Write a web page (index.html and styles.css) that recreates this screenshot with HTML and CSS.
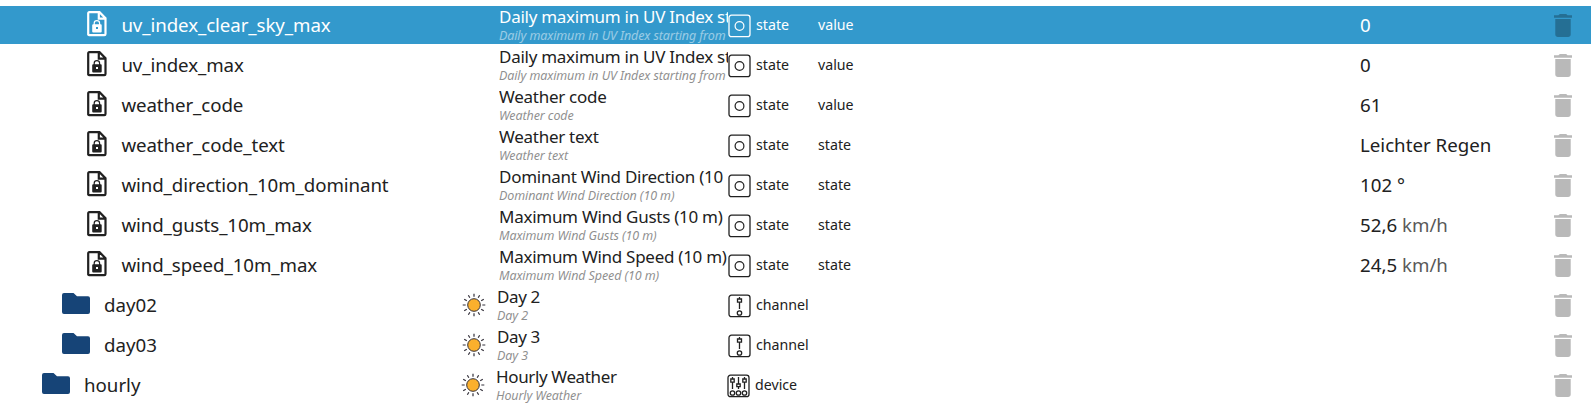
FILE: index.html
```html
<!DOCTYPE html>
<html lang="de"><head><meta charset="utf-8"><title>Objects</title><link rel="stylesheet" href="styles.css"></head>
<body>
<svg class="defs" aria-hidden="true">
<symbol id="doc" viewBox="0 0 20 26"><path d="M2.200 1.200h10.300l6 6V23a1.200 1.200 0 0 1-1.200 1.200H2.200A1 1 0 0 1 1.200 23V2.200a1 1 0 0 1 1-1zM11.800 1.500v6.200h6.200" fill="none" stroke="currentColor" stroke-width="2.200"/><path d="M7.200 14v-1.700a2.700 2.700 0 0 1 5.400 0V14" fill="none" stroke="currentColor" stroke-width="1.200"/><path fill-rule="evenodd" fill="currentColor" d="M6.200 13.300h7.500a1 1 0 0 1 1 1v6.200a1 1 0 0 1-1 1H6.200a1 1 0 0 1-1-1v-6.200a1 1 0 0 1 1-1zM9 16v2h2v-2z"/></symbol>
<symbol id="folder" viewBox="0 0 28 21"><path fill="currentColor" d="M2 0h9.500l3.500 3.200h11a2 2 0 0 1 2 2V19a2 2 0 0 1-2 2H2a2 2 0 0 1-2-2V2a2 2 0 0 1 2-2z"/></symbol>
<symbol id="trash" viewBox="5 3 14 18" preserveAspectRatio="none"><path fill="currentColor" d="M6 19c0 1.100.9 2 2 2h8c1.100 0 2-.9 2-2V7H6zM19 4h-3.500l-1-1h-5l-1 1H5v2h14z"/></symbol>
<symbol id="state" viewBox="0 0 23 24"><rect x="1" y="1.200" width="21" height="21.500" rx="2.500" fill="none" stroke="currentColor" stroke-width="1.300"/><circle cx="11.500" cy="12" r="4.400" fill="none" stroke="currentColor" stroke-width="1.200"/></symbol>
<symbol id="channel" viewBox="0 0 23 24"><g fill="none" stroke="currentColor" stroke-width="1.300"><rect x="1" y="1.200" width="21" height="21.500" rx="2.500"/><path d="M11.500 3v2M9.500 5h4v3.200h-4zM11.500 8.200V15"/><circle cx="11.500" cy="19" r="2.200"/></g></symbol>
<symbol id="device" viewBox="0 0 23 24"><g fill="none" stroke="currentColor" stroke-width="1.300"><rect x="1" y="1.200" width="21" height="21.500" rx="2.500"/><path d="M5.500 3v2M3.800 5h3.400v3.200H3.800zM5.500 8.200V15M11.500 3v7M9.800 10h3.400v2.700H9.800zM11.500 12.700V15M17.500 3v2M15.800 5h3.400v3.200h-3.400zM17.500 8.200V15"/><circle cx="5.500" cy="19" r="2.200"/><circle cx="11.500" cy="19" r="2.200"/><circle cx="17.500" cy="19" r="2.200"/></g></symbol>
<symbol id="sun" viewBox="-12 -12 24 24"><circle r="6.300" fill="#fbb02d" stroke="#33303a" stroke-width="1"/><g stroke="#33303a" stroke-width="1.200"><path d="M0-8.300V-11.300M0 8.300V11.300M-8.300 0H-11.300M8.300 0H11.300"/><path d="M0-8.300V-11.300M0 8.300V11.300M-8.300 0H-11.300M8.300 0H11.300" transform="rotate(30)"/><path d="M0-8.300V-11.300M0 8.300V11.300M-8.300 0H-11.300M8.300 0H11.300" transform="rotate(60)"/></g></symbol>
</svg>
<main class="tree" id="tree"></main>
<script src="tree.js"></script>
</body></html>
```
FILE: tree.js
```js
const long = 'Daily maximum in UV Index starting from';
const rows = [
  ['uv_index_clear_sky_max', long, 'state', 'value', '0'],
  ['uv_index_max', long, 'state', 'value', '0'],
  ['weather_code', 'Weather code', 'state', 'value', '61'],
  ['weather_code_text', 'Weather text', 'state', 'state', 'Leichter Regen'],
  ['wind_direction_10m_dominant', 'Dominant Wind Direction (10 m)', 'state', 'state', '102 °'],
  ['wind_gusts_10m_max', 'Maximum Wind Gusts (10 m)', 'state', 'state', '52,6', 'km/h'],
  ['wind_speed_10m_max', 'Maximum Wind Speed (10 m)', 'state', 'state', '24,5', 'km/h'],
  ['day02', 'Day 2', 'channel', '', ''],
  ['day03', 'Day 3', 'channel', '', ''],
  ['hourly', 'Hourly Weather', 'device', '', '']
];
const icon = (n) => `<svg class="i-${n}"><use href="#${n}"/></svg>`;
document.getElementById('tree').innerHTML = rows.map(([id, name, type, role, value, unit], i) => `
<div class="row ${type}${i ? '' : ' selected'}">
<div class="id">${icon(type === 'state' ? 'doc' : 'folder')}<span>${id}</span></div>
<div class="pic">${type === 'state' ? '' : icon('sun')}</div>
<div class="name"><span class="title${name === long ? ' long' : ''}">${name}</span><span class="desc">${name}</span></div>
<div class="type">${icon(type)}<span>${type}</span></div>
<div class="role"><span>${role}</span></div>
<div class="value"><span>${value}</span>${unit ? ` <span class="unit">${unit}</span>` : ''}</div>
<div class="del">${icon('trash')}</div>
</div>`).join('');
```
FILE: styles.css
```css
body { margin: 0; background: #fff; color: #212121; font-family: "Noto Sans", "Open Sans", sans-serif; }
.defs { display: none; }
svg { display: block; flex: none; }
.tree { display: flex; flex-direction: column; gap: 2px; padding-top: 6px; }
.row { height: 38px; display: grid; grid-template-columns: 462px 37px 229px 90px 542px 194px 37px; align-items: center; white-space: nowrap; }
.channel { grid-template-columns: 462px 35px 231px 90px 542px 194px 37px; }
.device { grid-template-columns: 461px 35px 231px 91px 542px 194px 37px; }
.row.selected { background: #3399cc; color: #fff; }
.id { display: flex; align-items: center; font-size: 18.7px; letter-spacing: 0; padding-left: 87px; }
.state .id { letter-spacing: -.08px; }
.channel .id { padding-left: 62px; }
.device .id { padding-left: 42px; }
.id span, .type span, .role, .value { padding-bottom: 2px; }
.i-doc { width: 20px; height: 26px; margin: -3px 14.700px 0 -.3px; }
.i-folder { width: 28px; height: 21px; margin: -3px 14px 0 0; color: #164477; }
.i-sun { width: 24px; height: 24px; margin-top: -1px; }
.name { display: flex; flex-direction: column; overflow: hidden; height: 38px; }
.title { flex: none; box-sizing: border-box; height: 22px; overflow: hidden; white-space: normal; font-size: 17px; line-height: 22px; letter-spacing: -.27px; }
.title.long { white-space: nowrap; }
.desc { font-size: 12.5px; line-height: 15px; letter-spacing: -.1px; font-style: italic; opacity: .5; }
.channel .title, .device .title { letter-spacing: -.37px; }
.type { display: flex; align-items: center; gap: 5px; font-size: 14.2px; }
.type svg { width: 23px; height: 24px; margin-top: 1px; }
.role { font-size: 14.2px; }
.value { font-size: 18.7px; letter-spacing: 0; }
.unit { opacity: .75; }
.i-trash { width: 18px; height: 23px; opacity: .27; color: #000; }
```
